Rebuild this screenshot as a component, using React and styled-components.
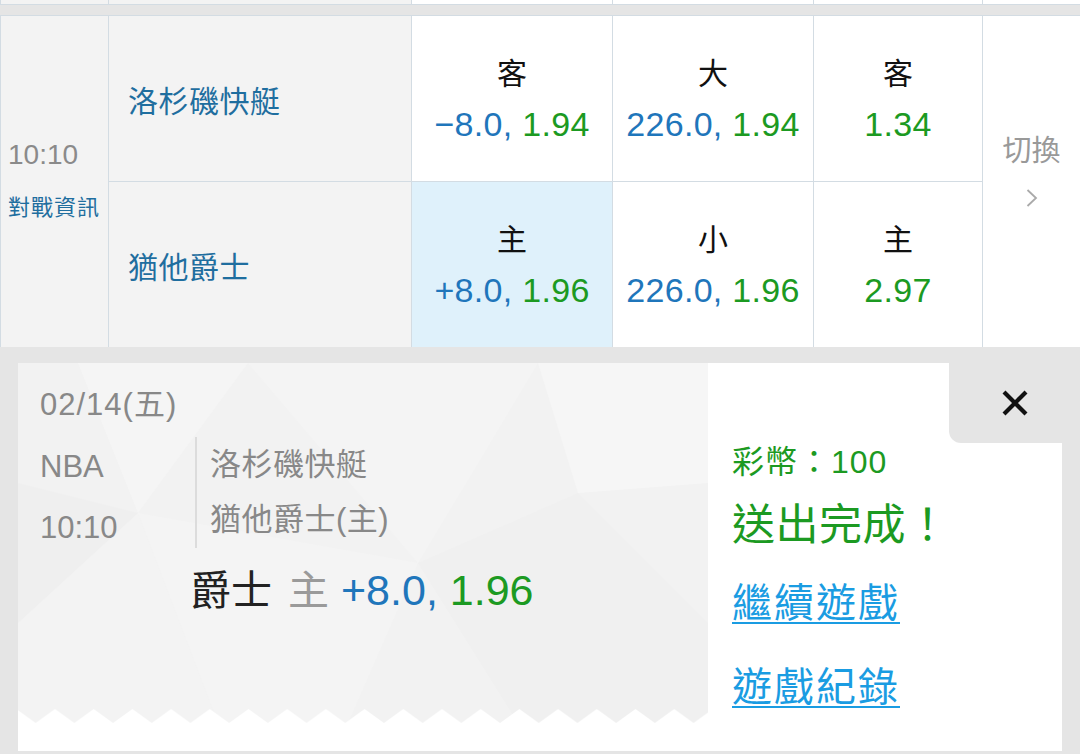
import styled, { createGlobalStyle } from "styled-components";

const GlobalStyle = createGlobalStyle`
  html, body {
    margin: 0;
    padding: 0;
    background: #e5e5e5;
  }
  body {
    font-family: "Liberation Sans", "Noto Sans CJK TC", sans-serif;
  }
`;

const COLS = "107px 302px 200px 200px 168px 1fr";
const LINE = "#d3dce3";
const BLUE = "#1f76bb";
const GREEN = "#1c9a22";

const Page = styled.div`
  width: 1080px;
  height: 754px;
  overflow: hidden;
  background: #e5e5e5;
  display: flex;
  flex-direction: column;
`;

const Stub = styled.div`
  display: grid;
  grid-template-columns: ${COLS};
  column-gap: 1px;
  padding-left: 1px;
  height: 4px;
  background: ${LINE};
  border-bottom: 1px solid ${LINE};
`;

const StubCell = styled.div`
  background: ${(p) => (p.$gray ? "#f3f3f3" : "#ffffff")};
`;

const Board = styled.div`
  margin-top: 10px;
  display: grid;
  grid-template-columns: ${COLS};
  grid-template-rows: 165px 165px;
  gap: 1px;
  padding: 1px 0 0 1px;
  background: ${LINE};
`;

const TimeCell = styled.div`
  grid-row: 1 / 3;
  background: #f3f3f3;
  display: flex;
  flex-direction: column;
  justify-content: center;
  padding: 0 0 7px 7px;
  .time {
    font-size: 28px;
    line-height: 40px;
    color: #8a8a8a;
  }
  .info {
    margin-top: 20px;
    font-size: 22px;
    line-height: 26px;
    color: #1f6e9f;
    letter-spacing: 1px;
  }
`;

const TeamCell = styled.div`
  background: #f3f3f3;
  display: flex;
  align-items: center;
  padding-left: 19px;
  font-size: 30px;
  color: #1f6e9f;
  letter-spacing: 0.5px;
`;

const OddsCell = styled.div`
  background: ${(p) => (p.$active ? "#dff1fb" : "#ffffff")};
  display: flex;
  flex-direction: column;
  align-items: center;
  justify-content: center;
  .side {
    font-size: 30px;
    line-height: 50px;
    color: #111;
  }
  .odds {
    font-size: 34px;
    line-height: 50px;
    white-space: nowrap;
    letter-spacing: 0.3px;
  }
`;

const Line = styled.span`
  color: ${BLUE};
`;

const Price = styled.span`
  color: ${GREEN};
`;

const SwitchCell = styled.div`
  grid-row: 1 / 3;
  grid-column: 6;
  background: #ffffff;
  display: flex;
  flex-direction: column;
  align-items: center;
  justify-content: center;
  padding-bottom: 26px;
  font-size: 29px;
  line-height: 40px;
  color: #999;
  svg {
    margin-top: 18px;
  }
`;

const Footer = styled.div`
  flex: 1;
  padding: 16px 18px 3px 18px;
  display: flex;
`;

const Panel = styled.div`
  flex: 1;
  display: flex;
  position: relative;
`;

const Ticket = styled.div`
  width: 690px;
  background: #ffffff;
  display: flex;
  flex-direction: column;
`;

const Pattern = styled.div`
  position: relative;
  height: 360px;
  background: #f2f2f2;
  overflow: hidden;
  > svg.bg {
    position: absolute;
    inset: 0;
  }
  > svg.zig {
    position: absolute;
    left: 0;
    bottom: 0;
  }
`;

const TicketBody = styled.div`
  position: relative;
  padding: 22px 0 0 22px;
  color: #888;
  font-size: 31px;
`;

const DateLine = styled.div`
  line-height: 40px;
  letter-spacing: 1px;
`;

const MatchRow = styled.div`
  margin-top: 12px;
  display: flex;
`;

const LeagueCol = styled.div`
  width: 155px;
  padding-top: 10px;
  display: flex;
  flex-direction: column;
  gap: 21px;
  line-height: 40px;
`;

const TeamsCol = styled.div`
  border-left: 2px solid #dcdcdc;
  padding: 8px 0 0 13px;
  display: flex;
  flex-direction: column;
  gap: 15px;
  line-height: 40px;
  font-size: 31px;
  letter-spacing: 0.5px;
  height: 103px;
`;

const BetLine = styled.div`
  margin-top: 17px;
  padding-left: 150px;
  font-size: 41px;
  line-height: 50px;
  white-space: nowrap;
  .team {
    color: #222;
  }
  .home {
    color: #9a9a9a;
    margin: 0 12px 0 16px;
  }
  .nums {
    font-size: 43px;
  }
`;

const Result = styled.div`
  flex: 1;
  background: #ffffff;
  padding: 79px 0 0 24px;
  display: flex;
  flex-direction: column;
  align-items: flex-start;
`;

const Coins = styled.div`
  font-size: 32px;
  line-height: 40px;
  color: ${GREEN};
  letter-spacing: 1px;
`;

const Done = styled.div`
  margin-top: 18px;
  font-size: 43px;
  line-height: 50px;
  color: ${GREEN};
  letter-spacing: 0.5px;
`;

const Link = styled.a`
  margin-top: ${(p) => p.$gap}px;
  font-size: 40px;
  line-height: 50px;
  color: #1a9ce2;
  text-decoration: underline;
  text-decoration-thickness: 2px;
  text-underline-offset: 5px;
  letter-spacing: 2px;
  cursor: pointer;
`;

const Close = styled.button`
  position: absolute;
  top: 0;
  right: -18px;
  width: 131px;
  height: 80px;
  border: none;
  padding: 0;
  background: #e5e5e5;
  border-bottom-left-radius: 12px;
  display: flex;
  align-items: center;
  justify-content: center;
  cursor: pointer;
`;

const rows = [
  {
    team: "洛杉磯快艇",
    cells: [
      { side: "客", line: "−8.0, ", price: "1.94" },
      { side: "大", line: "226.0, ", price: "1.94" },
      { side: "客", line: "", price: "1.34" },
    ],
  },
  {
    team: "猶他爵士",
    cells: [
      { side: "主", line: "+8.0, ", price: "1.96", active: true },
      { side: "小", line: "226.0, ", price: "1.96" },
      { side: "主", line: "", price: "2.97" },
    ],
  },
];

function Facets() {
  return (
    <svg className="bg" width="690" height="360" viewBox="0 0 690 360">
      <polygon points="60,0 230,0 120,150" fill="#f5f5f5" />
      <polygon points="230,0 520,0 400,200" fill="#f4f4f4" />
      <polygon points="0,120 120,150 0,260" fill="#efefef" />
      <polygon points="120,150 400,200 330,360 200,360" fill="#f4f4f4" />
      <polygon points="400,200 560,130 690,260 690,360 500,360" fill="#f0f0f0" />
      <polygon points="520,0 690,0 690,120 560,130" fill="#f6f6f6" />
      <polygon points="0,260 120,150 200,360 0,360" fill="#f3f3f3" />
    </svg>
  );
}

function Zigzag() {
  return (
    <svg className="zig" width="690" height="14" viewBox="0 0 690 14">
      <defs>
        <pattern id="teeth" width="38.7" height="14" patternUnits="userSpaceOnUse" x="17.65">
          <path d="M0 14 L19.35 0 L38.7 14 Z" fill="#ffffff" />
        </pattern>
      </defs>
      <rect width="690" height="14" fill="url(#teeth)" />
    </svg>
  );
}

export default function App() {
  return (
    <Page>
      <GlobalStyle />
      <Stub>
        <StubCell $gray />
        <StubCell $gray />
        <StubCell />
        <StubCell />
        <StubCell />
        <StubCell />
      </Stub>
      <Board>
        <TimeCell>
          <span className="time">10:10</span>
          <span className="info">對戰資訊</span>
        </TimeCell>
        {rows.map((row, r) => (
          <>
            <TeamCell key={"t" + r} style={{ gridRow: r + 1, gridColumn: 2 }}>
              {row.team}
            </TeamCell>
            {row.cells.map((c, i) => (
              <OddsCell key={r + "-" + i} $active={c.active} style={{ gridRow: r + 1, gridColumn: i + 3 }}>
                <span className="side">{c.side}</span>
                <span className="odds">
                  {c.line && <Line>{c.line}</Line>}
                  <Price>{c.price}</Price>
                </span>
              </OddsCell>
            ))}
          </>
        ))}
        <SwitchCell>
          <span>切換</span>
          <svg width="12" height="18" viewBox="0 0 12 18">
            <path d="M1.5 1 L10 9 L1.5 17" fill="none" stroke="#aaa" strokeWidth="1.8" />
          </svg>
        </SwitchCell>
      </Board>
      <Footer>
        <Panel>
          <Ticket>
            <Pattern>
              <Facets />
              <Zigzag />
              <TicketBody>
                <DateLine>02/14(五)</DateLine>
                <MatchRow>
                  <LeagueCol>
                    <span>NBA</span>
                    <span>10:10</span>
                  </LeagueCol>
                  <TeamsCol>
                    <span>洛杉磯快艇</span>
                    <span>猶他爵士(主)</span>
                  </TeamsCol>
                </MatchRow>
                <BetLine>
                  <span className="team">爵士</span>
                  <span className="home">主</span>
                  <span className="nums">
                    <Line>+8.0, </Line>
                    <Price>1.96</Price>
                  </span>
                </BetLine>
              </TicketBody>
            </Pattern>
          </Ticket>
          <Result>
            <Coins>彩幣：100</Coins>
            <Done>送出完成！</Done>
            <Link $gap={28}>繼續遊戲</Link>
            <Link $gap={34}>遊戲紀錄</Link>
          </Result>
          <Close aria-label="close">
            <svg width="28" height="28" viewBox="0 0 28 28">
              <path d="M3 3 L25 25 M25 3 L3 25" stroke="#111" strokeWidth="4.2" />
            </svg>
          </Close>
        </Panel>
      </Footer>
    </Page>
  );
}
